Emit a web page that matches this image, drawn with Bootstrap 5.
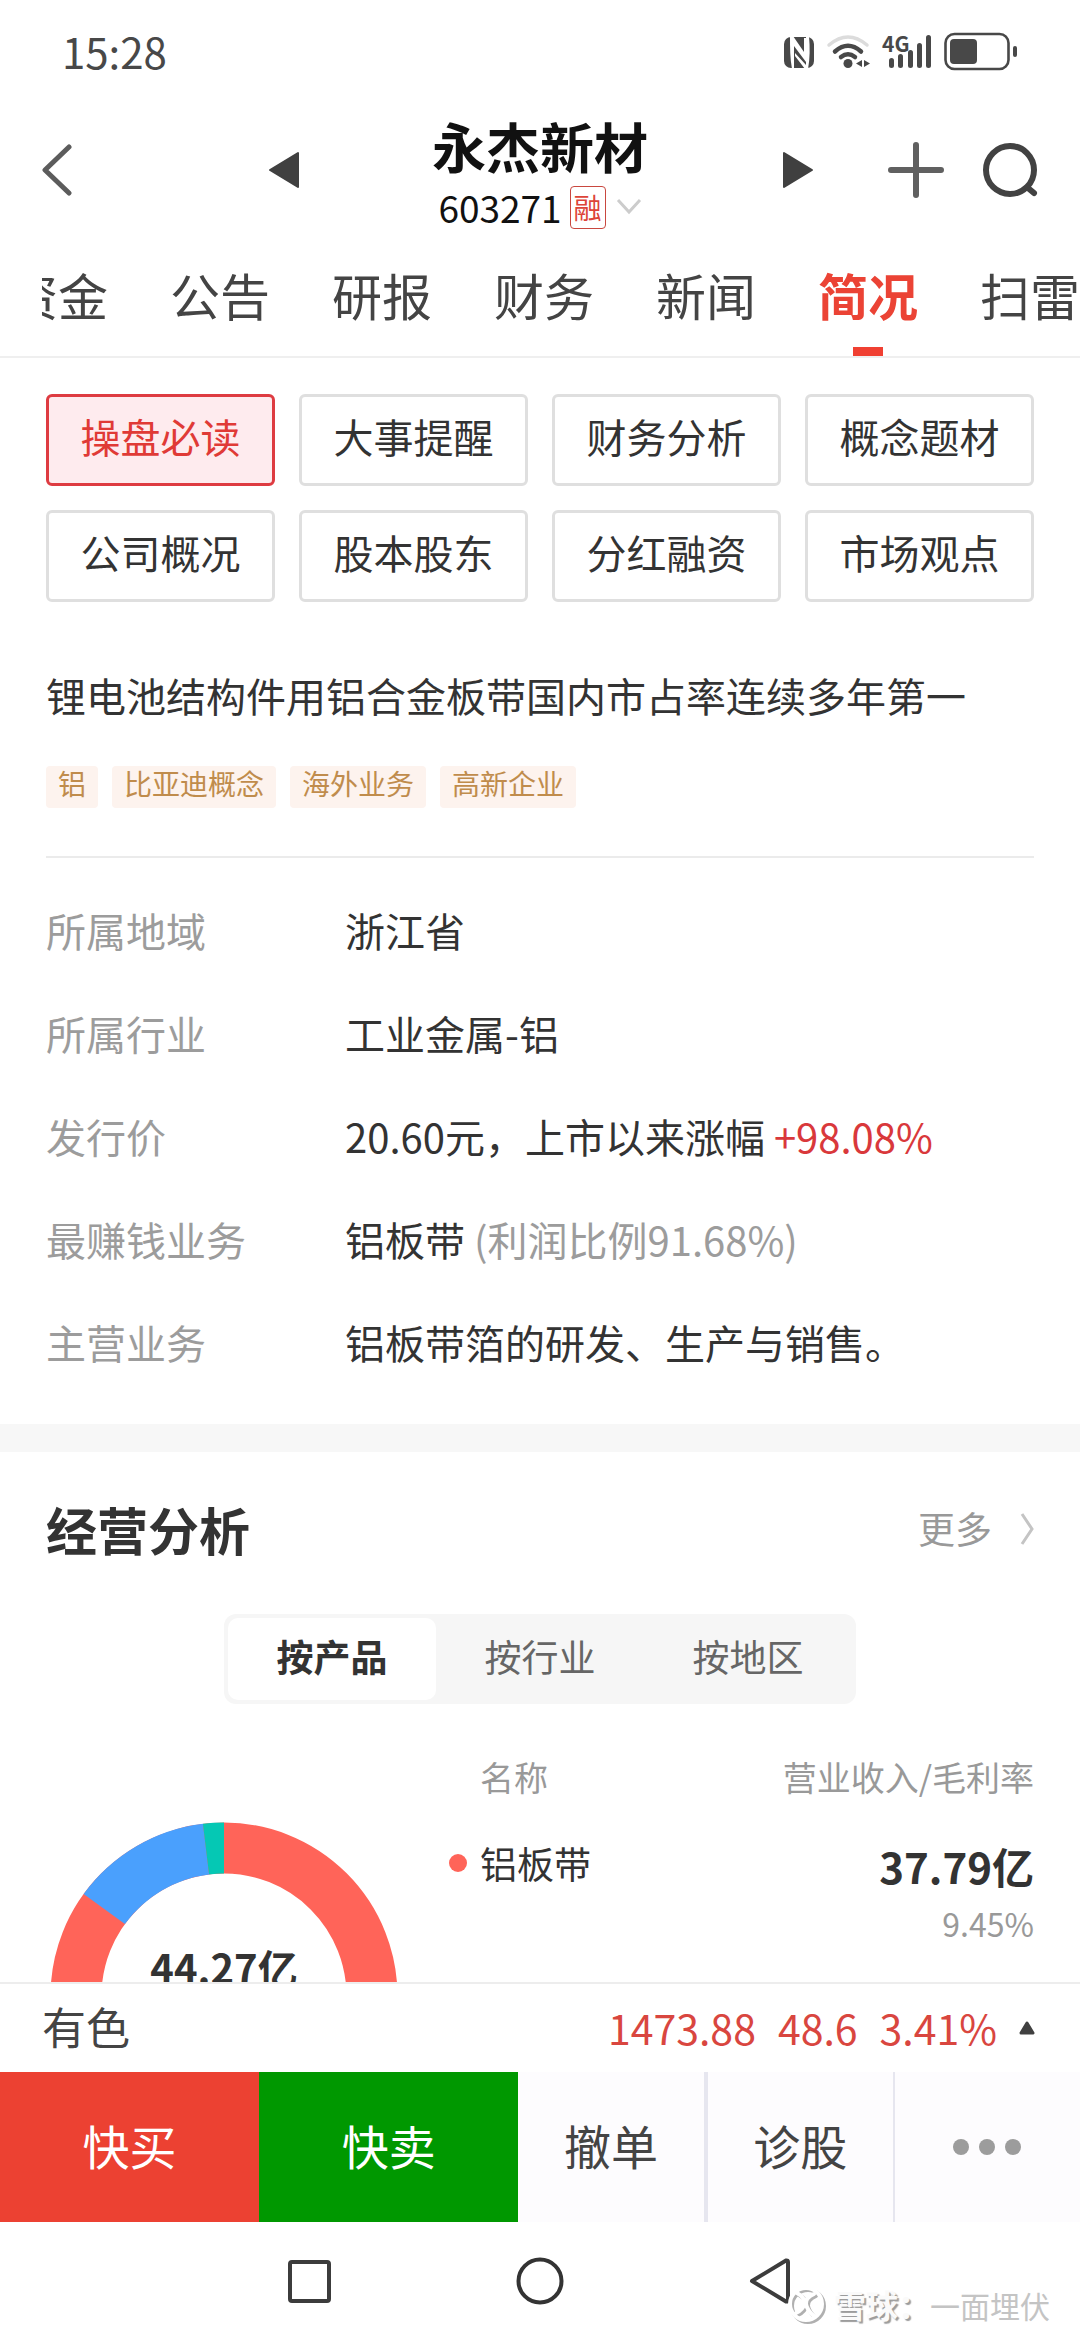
<!DOCTYPE html>
<html lang="zh-CN">
<head>
<meta charset="utf-8">
<meta name="viewport" content="width=device-width, initial-scale=1">
<title>永杰新材 603271 简况</title>
<link href="https://cdn.jsdelivr.net/npm/bootstrap@5.3.0/dist/css/bootstrap.min.css" rel="stylesheet">
<style>
  body { font-family: "Noto Sans CJK SC", "Noto Sans", sans-serif; background: #fff; color: #333; font-size: 40px; }
  a { text-decoration: none; }
  svg { display: block; flex: none; }
  button { font-family: inherit; }
  .icon-btn { border: 0; background: none; padding: 0; }

  .status-bar { height: 102px; padding: 0 62px; color: #484848; font-size: 42px; line-height: 60px; }

  .stock-head { height: 136px; padding: 0 42px; }
  .stock-title { padding: 11px 0 3px; }
  .stock-name { font-size: 54px; line-height: 66px; font-weight: 700; color: #111; margin: 0; }
  .stock-code { font-size: 37px; line-height: 56px; color: #111; }
  .margin-tag { font-size: 28px; line-height: 41px; border: 1px solid #c9473f; border-radius: 4px; color: #dd4438; padding: 0 3px; }
  .side { flex: 1 1 0; }
  .head-tools { gap: 74px; }
  .tool-pair { gap: 38px; }

  .tab-strip { border-bottom: 2px solid #efefef; padding-left: 42px; }
  .tab-clip { overflow: hidden; }
  .tab-list { gap: 62px; margin-left: -34px; flex-wrap: nowrap; }
  .tab-list a { display: block; position: relative; white-space: nowrap; font-size: 50px; line-height: 60px; padding: 26px 0 32px; color: #444; }
  .tab-list a.active { color: #eb4335; font-weight: 700; }
  .tab-list a.active::after { content: ""; position: absolute; left: 50%; bottom: 0; width: 30px; height: 9px; margin-left: -15px; background: #f04032; }

  .pane { padding: 36px 46px 30px; }
  .chip-grid { display: grid; grid-template-columns: repeat(4, 1fr); gap: 24px; }
  .chip { height: 92px; border: 3px solid #dfdfdf; border-radius: 6px; background: #fff; color: #333; font-size: 40px; line-height: 48px; padding: 0 0 8px; }
  .chip.active { border-color: #de3b41; background: #feebee; color: #e03a36; }
  .headline { font-size: 40px; line-height: 60px; font-weight: 400; margin: 63px 0 41px; }
  .topics { gap: 14px; }
  .topic { font-size: 28px; line-height: 34px; padding: 0 12px 8px; border-radius: 4px; background: #fdf3ee; color: #c08c4c; }
  .rule { height: 2px; background: #ebebeb; margin: 48px 0 21px; }
  .facts { margin: 0; line-height: 103px; }
  .facts dt { width: 299px; font-weight: 400; color: #9c9c9c; }
  .facts dd { margin: 0; }
  .soft { color: #9c9c9c; }
  .rise { color: #d9383b; }
  .band { height: 28px; background: #f7f7f7; }

  .analysis { padding: 39px 46px 0; }
  .sec-title { font-size: 51px; line-height: 76px; font-weight: 700; margin: 0; }
  .more { font-size: 37px; color: #999; gap: 28px; }
  .seg { background: #f6f6f6; border-radius: 12px; padding: 4px; width: 632px; height: 90px; margin: 47px auto 48px; }
  .seg button { flex: 1 1 0; border: 0; background: none; border-radius: 10px; font-size: 37px; line-height: 50px; color: #666; padding: 0 0 6px; }
  .seg button.active { background: #fff; color: #333; font-weight: 700; }
  .donut { margin: 70px 51px 0 4px; }
  .income { flex: 1 1 0; font-size: 34px; line-height: 50px; }
  .income th { font-weight: 400; color: #999; padding: 0 0 34px; }
  .income td { padding: 0; vertical-align: top; }
  .income th:first-child { padding-left: 31px; }
  .prod { font-size: 37px; line-height: 54px; gap: 13px; }
  .dot { width: 18px; height: 18px; border-radius: 50%; background: #ff6459; }
  .amount { font-size: 42px; line-height: 60px; font-weight: 700; }
  .margin-rate { font-size: 32px; line-height: 54px; color: #999; }

  .foot { background: #fff; position: relative; }
  .index-row { border-top: 2px solid #ededed; height: 90px; padding: 0 45px 0 42px; color: #d9463f; }
  .index-name { font-size: 44px; color: #444; padding-bottom: 4px; }
  .index-nums { font-size: 41px; gap: 22px; }
  .trade { height: 150px; }
  .trade button { border: 0; border-radius: 0; font-size: 47px; color: #444; background: #fdfcfe; padding: 0 0 4px; }
  .trade .big { flex: 0 0 24%; color: #fff; }
  .trade .small-cell { flex: 1 1 0; }
  .trade .buy { background: #ec4132; }
  .trade .sell { background: #009800; }
  .trade .line-a { border-right: 4px solid #e6e6ef; }
  .trade .line-b { border-right: 2px solid #e6e6ef; }
  .trade .dots { padding: 0; }
  .sysnav { height: 118px; gap: 180px; }
  .watermark { position: absolute; right: 30px; bottom: 15px; font-size: 30px; line-height: 40px; color: #c4c4c4; gap: 7px; }
  .watermark b { font-size: 32px; font-weight: 700; color: #fafafa; text-shadow: 2px 2px 1px #9c9c9c; }
</style>
<script src="https://cdn.jsdelivr.net/npm/bootstrap@5.3.0/dist/js/bootstrap.bundle.min.js"></script>
</head>
<body>
<div class="d-flex flex-column vh-100 overflow-hidden">

  <header class="flex-shrink-0">
    <div class="status-bar d-flex align-items-center justify-content-between">
      <span>15:28</span>
      <svg width="236" height="64" viewBox="780 19 236 64" fill="#484848" role="img" aria-label="NFC、无线网络、4G 信号、电池">
        <!-- NFC -->
        <rect x="782" y="37" width="30" height="31" rx="7"/>
        <path d="M788 36L791 36L802 52V38H804V62L792 46V69H790C788 58 788 48 788 36Z" fill="#fff"/>
        <path d="M804 36H807C808 48 808 58 806 69H803L793 56V53L804 65Z" fill="#fff"/>
        <!-- Wi-Fi -->
        <g fill="none" stroke-linecap="round" stroke-width="4.500">
          <path d="M827 45Q846 29 865 45" stroke="#dcdcdc" stroke-width="3.500"/>
          <path d="M833 51.500Q846 40 859 51.500" stroke="#484848"/>
          <path d="M839 57Q846 51.500 853 57" stroke="#484848"/>
        </g>
        <circle cx="846" cy="63.500" r="4.500"/>
        <path d="M860 60v7l-6-3.500zM862 60v7l6-3.500z"/>
        <!-- mobile signal -->
        <text x="880" y="52" font-size="21" font-weight="700" font-family="Noto Sans CJK SC, sans-serif">4G</text>
        <rect x="887" y="58" width="5" height="10" rx="2.500"/>
        <rect x="896" y="54" width="5" height="14" rx="2.500"/>
        <rect x="906" y="50" width="5" height="18" rx="2.500"/>
        <rect x="915" y="43" width="5" height="25" rx="2.500"/>
        <rect x="924" y="35" width="5" height="33" rx="2.500"/>
        <!-- battery -->
        <rect x="943.500" y="34" width="63" height="35" rx="9" fill="none" stroke="#484848" stroke-width="2.600"/>
        <rect x="948" y="39" width="27" height="25" rx="4"/>
        <rect x="1011" y="46" width="4" height="11" rx="2"/>
      </svg>
    </div>

    <div class="stock-head d-flex align-items-center">
      <div class="side d-flex align-items-center">
        <button class="icon-btn" type="button" aria-label="返回"><svg width="30" height="54" viewBox="0 0 30 54"><path d="M27 4L3 27L27 50" fill="none" stroke="#5c5c5c" stroke-width="5" stroke-linecap="round" stroke-linejoin="round"/></svg></button>
        <button class="icon-btn mx-auto ps-5" type="button" aria-label="上一只"><svg class="ms-3" width="32" height="38" viewBox="0 0 32 38"><path d="M2 19L30 2V36Z" fill="#404040" stroke="#404040" stroke-width="2" stroke-linejoin="round"/></svg></button>
      </div>
      <div class="stock-title text-center align-self-start">
        <h1 class="stock-name">永杰新材</h1>
        <div class="stock-code d-flex align-items-center justify-content-center">
          <span>603271</span>
          <span class="margin-tag ms-2">融</span>
          <svg class="ms-2" width="28" height="18" viewBox="0 0 28 18"><path d="M4 2L15 14L26 2" fill="none" stroke="#ccc" stroke-width="3"/></svg>
        </div>
      </div>
      <div class="side head-tools d-flex justify-content-end align-items-center">
        <button class="icon-btn" type="button" aria-label="下一只"><svg width="32" height="38" viewBox="0 0 32 38"><path d="M30 19L2 2V36Z" fill="#404040" stroke="#404040" stroke-width="2" stroke-linejoin="round"/></svg></button>
        <div class="tool-pair d-flex">
          <button class="icon-btn" type="button" aria-label="添加自选"><svg width="56" height="56" viewBox="0 0 56 56"><path d="M28 3V53M3 28H53" stroke="#606060" stroke-width="6" stroke-linecap="round"/></svg></button>
          <button class="icon-btn" type="button" aria-label="搜索"><svg width="56" height="56" viewBox="0 0 56 56" fill="none" stroke="#424242" stroke-width="6" stroke-linecap="round"><circle cx="28" cy="28" r="24"/><path d="M46 46L52 51"/></svg></button>
        </div>
      </div>
    </div>

    <nav class="tab-strip">
      <div class="tab-clip">
        <ul class="tab-list d-flex list-unstyled mb-0">
          <li><a href="#">资金</a></li>
          <li><a href="#">公告</a></li>
          <li><a href="#">研报</a></li>
          <li><a href="#">财务</a></li>
          <li><a href="#">新闻</a></li>
          <li><a href="#" class="active" aria-current="page">简况</a></li>
          <li><a href="#">扫雷</a></li>
        </ul>
      </div>
    </nav>
  </header>

  <main class="flex-grow-1 overflow-hidden">
    <section class="pane">
      <div class="chip-grid">
        <button type="button" class="chip active">操盘必读</button>
        <button type="button" class="chip">大事提醒</button>
        <button type="button" class="chip">财务分析</button>
        <button type="button" class="chip">概念题材</button>
        <button type="button" class="chip">公司概况</button>
        <button type="button" class="chip">股本股东</button>
        <button type="button" class="chip">分红融资</button>
        <button type="button" class="chip">市场观点</button>
      </div>
      <p class="headline">锂电池结构件用铝合金板带国内市占率连续多年第一</p>
      <div class="topics d-flex">
        <a href="#" class="topic">铝</a>
        <a href="#" class="topic">比亚迪概念</a>
        <a href="#" class="topic">海外业务</a>
        <a href="#" class="topic">高新企业</a>
      </div>
      <div class="rule"></div>
      <dl class="facts">
        <div class="d-flex"><dt>所属地域</dt><dd>浙江省</dd></div>
        <div class="d-flex"><dt>所属行业</dt><dd>工业金属-铝</dd></div>
        <div class="d-flex"><dt>发行价</dt><dd>20.60元，上市以来涨幅 <span class="rise">+98.08%</span></dd></div>
        <div class="d-flex"><dt>最赚钱业务</dt><dd>铝板带 <span class="soft">(利润比例91.68%)</span></dd></div>
        <div class="d-flex"><dt>主营业务</dt><dd>铝板带箔的研发、生产与销售。</dd></div>
      </dl>
    </section>

    <div class="band"></div>

    <section class="analysis">
      <div class="d-flex justify-content-between align-items-center">
        <h2 class="sec-title">经营分析</h2>
        <a href="#" class="more d-flex align-items-center">更多
          <svg width="14" height="34" viewBox="0 0 14 34"><path d="M2 2L12 17L2 32" fill="none" stroke="#c4c4c4" stroke-width="3"/></svg>
        </a>
      </div>
      <div class="seg d-flex">
        <button type="button" class="active">按产品</button>
        <button type="button">按行业</button>
        <button type="button">按地区</button>
      </div>
      <div class="d-flex align-items-start">
        <svg class="donut" width="348" height="348" viewBox="0 0 348 348" role="img" aria-label="营业收入构成">
          <g fill="none" stroke-width="51" transform="rotate(-90 174 174)">
            <circle cx="174" cy="174" r="148" pathLength="360" stroke="#ff6459"/>
            <circle cx="174" cy="174" r="148" pathLength="360" stroke="#4aa0fd" stroke-dasharray="47 313" stroke-dashoffset="-306"/>
            <circle cx="174" cy="174" r="148" pathLength="360" stroke="#05c8b4" stroke-dasharray="7 353" stroke-dashoffset="-353"/>
          </g>
          <text x="174" y="162" text-anchor="middle" font-size="40" font-weight="700" fill="#333">44.27亿</text>
        </svg>
        <table class="income">
          <thead>
            <tr><th scope="col">名称</th><th scope="col" class="text-end">营业收入/毛利率</th></tr>
          </thead>
          <tbody>
            <tr>
              <td><div class="prod d-flex align-items-center"><span class="dot"></span>铝板带</div></td>
              <td class="text-end"><div class="amount">37.79亿</div><div class="margin-rate">9.45%</div></td>
            </tr>
          </tbody>
        </table>
      </div>
    </section>
  </main>

  <footer class="foot flex-shrink-0">
    <div class="index-row d-flex align-items-center">
      <span class="index-name me-auto">有色</span>
      <div class="index-nums d-flex align-items-center">
        <span>1473.88</span><span>48.6</span><span>3.41%</span>
        <svg width="16" height="14" viewBox="0 0 16 14"><path d="M8 2L14 12H2Z" fill="#404040" stroke="#404040" stroke-width="3" stroke-linejoin="round"/></svg>
      </div>
    </div>
    <div class="trade d-flex">
      <button type="button" class="big buy">快买</button>
      <button type="button" class="big sell">快卖</button>
      <button type="button" class="small-cell line-a">撤单</button>
      <button type="button" class="small-cell line-b">诊股</button>
      <button type="button" class="small-cell dots" aria-label="更多操作"><svg class="mx-auto" width="68" height="16" viewBox="0 0 68 16" fill="#9c9c9c"><circle cx="8" cy="8" r="8"/><circle cx="34" cy="8" r="8"/><circle cx="60" cy="8" r="8"/></svg></button>
    </div>
    <div class="sysnav d-flex align-items-center justify-content-center">
      <button class="icon-btn" type="button" aria-label="最近任务"><svg width="50" height="50" viewBox="0 0 50 50"><rect x="5" y="6" width="39" height="39" rx="2" fill="none" stroke="#3c3c3c" stroke-width="4"/></svg></button>
      <button class="icon-btn" type="button" aria-label="主屏幕"><svg width="50" height="50" viewBox="0 0 50 50"><circle cx="25" cy="25" r="21.500" fill="none" stroke="#333" stroke-width="4"/></svg></button>
      <button class="icon-btn" type="button" aria-label="返回上级"><svg width="50" height="50" viewBox="0 0 50 50"><path d="M7 25L41 4.500Q43 4 43 6V44Q43 46 41 45.500Z" fill="none" stroke="#3c3c3c" stroke-width="4" stroke-linejoin="round"/></svg></button>
    </div>
    <div class="watermark d-flex align-items-center">
      <svg width="40" height="40" viewBox="0 0 40 40" fill="none" stroke-linecap="round">
        <g stroke="#b0b0b0" stroke-width="4"><circle cx="21" cy="21" r="16"/><path d="M12 10Q21 15 19 21Q18 27 11 30M29 11Q20 15 21 21Q22 27 29 33"/></g>
        <g stroke="#fff" stroke-width="4"><circle cx="19" cy="19" r="16"/><path d="M10 8Q19 13 17 19Q16 25 9 28M27 9Q18 13 19 19Q20 25 27 31"/></g>
      </svg>
      <span><b>雪球：</b>一面埋伏</span>
    </div>
  </footer>
</div>
</body>
</html>
